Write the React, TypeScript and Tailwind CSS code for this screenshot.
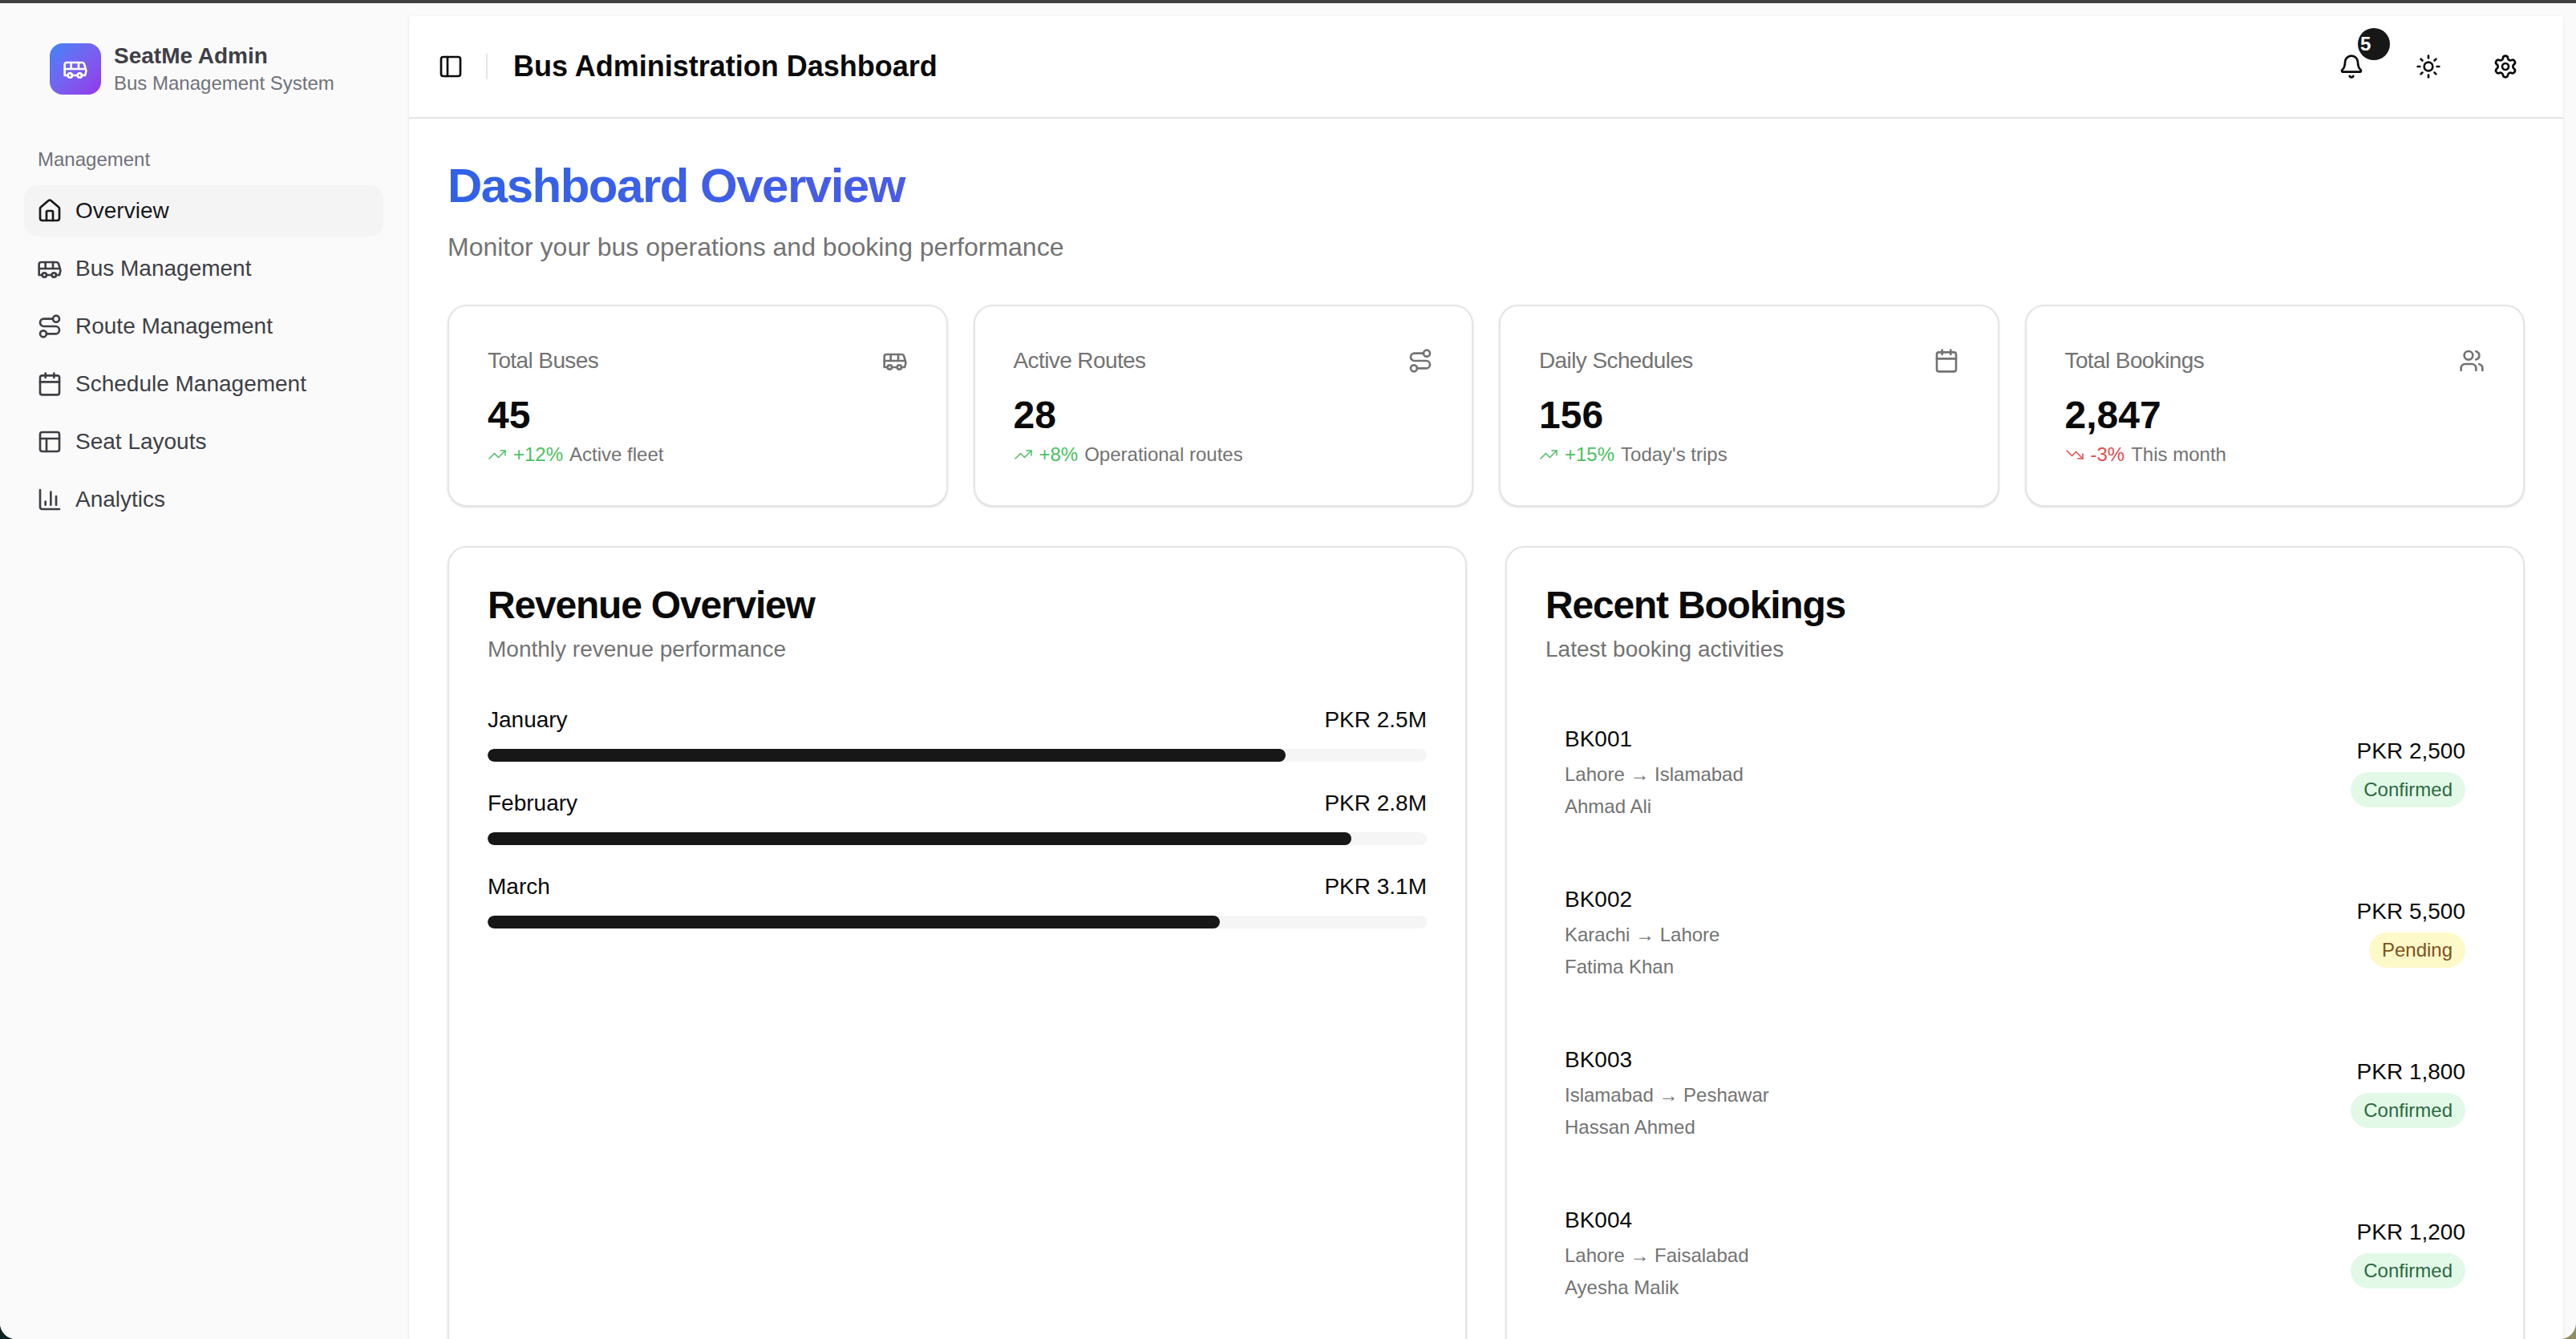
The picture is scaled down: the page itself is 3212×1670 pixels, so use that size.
import React from 'react';
import {
  Bell,
  Bus,
  Calendar,
  ChartColumn,
  House,
  PanelLeft,
  PanelsTopLeft,
  Route,
  Settings,
  Sun,
  TrendingDown,
  TrendingUp,
  Users,
} from 'lucide-react';

const navItems = [
  { label: 'Overview', icon: House, active: true },
  { label: 'Bus Management', icon: Bus },
  { label: 'Route Management', icon: Route },
  { label: 'Schedule Management', icon: Calendar },
  { label: 'Seat Layouts', icon: PanelsTopLeft },
  { label: 'Analytics', icon: ChartColumn },
];

const stats = [
  { title: 'Total Buses', value: '45', delta: '+12%', note: 'Active fleet', icon: Bus, up: true },
  { title: 'Active Routes', value: '28', delta: '+8%', note: 'Operational routes', icon: Route, up: true },
  { title: 'Daily Schedules', value: '156', delta: '+15%', note: "Today's trips", icon: Calendar, up: true },
  { title: 'Total Bookings', value: '2,847', delta: '-3%', note: 'This month', icon: Users, up: false },
];

const revenue = [
  { month: 'January', amount: 'PKR 2.5M', percent: 85 },
  { month: 'February', amount: 'PKR 2.8M', percent: 92 },
  { month: 'March', amount: 'PKR 3.1M', percent: 78 },
];

const bookings = [
  { id: 'BK001', route: 'Lahore → Islamabad', name: 'Ahmad Ali', price: 'PKR 2,500', status: 'Confirmed' },
  { id: 'BK002', route: 'Karachi → Lahore', name: 'Fatima Khan', price: 'PKR 5,500', status: 'Pending' },
  { id: 'BK003', route: 'Islamabad → Peshawar', name: 'Hassan Ahmed', price: 'PKR 1,800', status: 'Confirmed' },
  { id: 'BK004', route: 'Lahore → Faisalabad', name: 'Ayesha Malik', price: 'PKR 1,200', status: 'Confirmed' },
];

const Sidebar: React.FC = () => (
  <aside className="w-[510px] shrink-0 bg-[#fafafa]">
    <div className="flex items-center gap-4 pl-[62px] pt-12">
      <div className="flex h-16 w-16 items-center justify-center rounded-2xl bg-gradient-to-br from-[#3b82f6] to-[#9333ea] text-white">
        <Bus size={32} />
      </div>
      <div>
        <div className="text-[28px] leading-[36px] font-bold text-[#3f3f46]">SeatMe Admin</div>
        <div className="text-[24px] leading-[32px] text-[#71717a]">Bus Management System</div>
      </div>
    </div>

    <div className="mt-[63px] pl-[47px] text-[24px] leading-[32px] text-[#71717a]">Management</div>

    <nav className="mt-4 ml-[30px] flex w-[448px] flex-col gap-2">
      {navItems.map((item) => (
        <div
          key={item.label}
          className={
            item.active
              ? 'flex h-16 items-center gap-4 rounded-2xl bg-[#f4f4f5] px-4 text-[28px] text-[#18181b]'
              : 'flex h-16 items-center gap-4 rounded-2xl px-4 text-[28px] text-[#3f3f46]'
          }
        >
          <item.icon size={32} />
          <span>{item.label}</span>
        </div>
      ))}
    </nav>
  </aside>
);

const Header: React.FC = () => (
  <header className="flex h-[128px] shrink-0 items-center border-b-2 border-[#e5e5e5] pr-8 pl-6">
    <div className="flex h-14 w-14 items-center justify-center text-[#0a0a0a]">
      <PanelLeft size={32} />
    </div>
    <div className="ml-4 h-8 w-[2px] bg-[#e5e5e5]" />
    <h1 className="ml-8 text-[36px] font-bold text-[#0a0a0a]">Bus Administration Dashboard</h1>
    <div className="ml-auto flex items-center gap-4 text-[#0a0a0a]">
      <div className="relative flex h-20 w-20 items-center justify-center">
        <Bell size={32} />
        <span className="absolute -top-2 -right-2 flex h-10 w-10 items-center rounded-full bg-[#171717] pl-[3px] text-[24px] font-bold text-white">
          5
        </span>
      </div>
      <div className="flex h-20 w-20 items-center justify-center">
        <Sun size={32} />
      </div>
      <div className="flex h-20 w-20 items-center justify-center">
        <Settings size={32} />
      </div>
    </div>
  </header>
);

const StatCard: React.FC<(typeof stats)[number]> = ({ title, value, delta, note, icon: Icon, up }) => (
  <div className="rounded-[24px] border-2 border-[#e5e5e5] bg-white px-12 pt-12 pb-[47px] shadow-sm">
    <div className="flex h-10 items-center justify-between">
      <span className="text-[28px] tracking-[-0.6px] text-[#737373]">{title}</span>
      <Icon size={32} className="text-[#737373]" />
    </div>
    <div className="mt-4 text-[48px] leading-[64px] font-bold text-[#0a0a0a]">{value}</div>
    <div className="mt-[1px] flex h-8 items-center gap-2 text-[24px] text-[#737373]">
      {up ? (
        <TrendingUp size={24} strokeWidth={1.5} className="text-[#4bbf63]" />
      ) : (
        <TrendingDown size={24} strokeWidth={1.5} className="text-[#e24c4b]" />
      )}
      <span className={up ? 'text-[#4bbf63]' : 'text-[#e24c4b]'}>{delta}</span>
      <span>{note}</span>
    </div>
  </div>
);

const CardTitle: React.FC<{ title: string; subtitle: string }> = ({ title, subtitle }) => (
  <div className="mb-12">
    <h2 className="text-[48px] leading-[48px] font-bold tracking-[-0.025em] text-[#0a0a0a]">{title}</h2>
    <p className="mt-[11px] text-[28px] leading-[40px] text-[#737373]">{subtitle}</p>
  </div>
);

const RevenueCard: React.FC = () => (
  <div className="rounded-[24px] border-2 border-[#e5e5e5] bg-white p-12 shadow-sm">
    <CardTitle title="Revenue Overview" subtitle="Monthly revenue performance" />
    <div className="flex flex-col gap-8">
      {revenue.map((row) => (
        <div key={row.month}>
          <div className="mb-4 flex justify-between text-[28px] leading-[40px] text-[#0a0a0a]">
            <span>{row.month}</span>
            <span>{row.amount}</span>
          </div>
          <div className="h-4 overflow-hidden rounded-full bg-[#f5f5f5]">
            <div className="h-full rounded-full bg-[#171717]" style={{ width: `${row.percent}%` }} />
          </div>
        </div>
      ))}
    </div>
  </div>
);

const BookingsCard: React.FC = () => (
  <div className="rounded-[24px] border-2 border-[#e5e5e5] bg-white p-12 shadow-sm">
    <CardTitle title="Recent Bookings" subtitle="Latest booking activities" />
    <div className="flex flex-col gap-8">
      {bookings.map((b) => (
        <div key={b.id} className="flex items-center justify-between p-6">
          <div>
            <div className="text-[28px] leading-[40px] text-[#0a0a0a]">{b.id}</div>
            <div className="mt-2 text-[24px] leading-[32px] text-[#737373]">{b.route}</div>
            <div className="mt-2 text-[24px] leading-[32px] text-[#737373]">{b.name}</div>
          </div>
          <div className="flex flex-col items-end gap-[6px]">
            <div className="text-[28px] leading-[40px] text-[#0a0a0a]">{b.price}</div>
            <span
              className={
                b.status === 'Confirmed'
                  ? 'rounded-full bg-[#e2f9e8] px-4 py-1.5 text-[24px] leading-[32px] text-[#2d6a3f]'
                  : 'rounded-full bg-[#fef9c8] px-4 py-1.5 text-[24px] leading-[32px] text-[#7f5020]'
              }
            >
              {b.status}
            </span>
          </div>
        </div>
      ))}
    </div>
  </div>
);

export default function App() {
  return (
    <div className="h-[1670px] w-[3212px] overflow-hidden bg-gradient-to-r from-[#0d2424] to-[#8e8e5e] font-['Liberation_Sans',Arial,sans-serif]">
      <div className="flex h-full flex-col overflow-hidden rounded-b-[20px] bg-[#fafafa]">
        <div className="h-1 shrink-0 bg-[#404040]" />
        <div className="flex min-h-0 flex-1">
          <Sidebar />
          <main className="mt-4 mr-4 flex min-w-0 flex-1 flex-col overflow-hidden bg-white shadow-sm">
            <Header />
            <div className="min-h-0 flex-1 px-12 pt-12">
              <h1 className="bg-gradient-to-r from-[#2f62e8] to-[#7c3aed] bg-clip-text text-[60px] leading-[72px] font-bold tracking-[-0.025em] text-transparent">
                Dashboard Overview
              </h1>
              <p className="mt-4 text-[32px] leading-[48px] text-[#737373]">
                Monitor your bus operations and booking performance
              </p>
              <div className="mt-12 grid grid-cols-4 gap-8">
                {stats.map((s) => (
                  <StatCard key={s.title} {...s} />
                ))}
              </div>
              <div className="mt-[49px] grid grid-cols-2 gap-12">
                <RevenueCard />
                <BookingsCard />
              </div>
            </div>
          </main>
        </div>
      </div>
    </div>
  );
}
